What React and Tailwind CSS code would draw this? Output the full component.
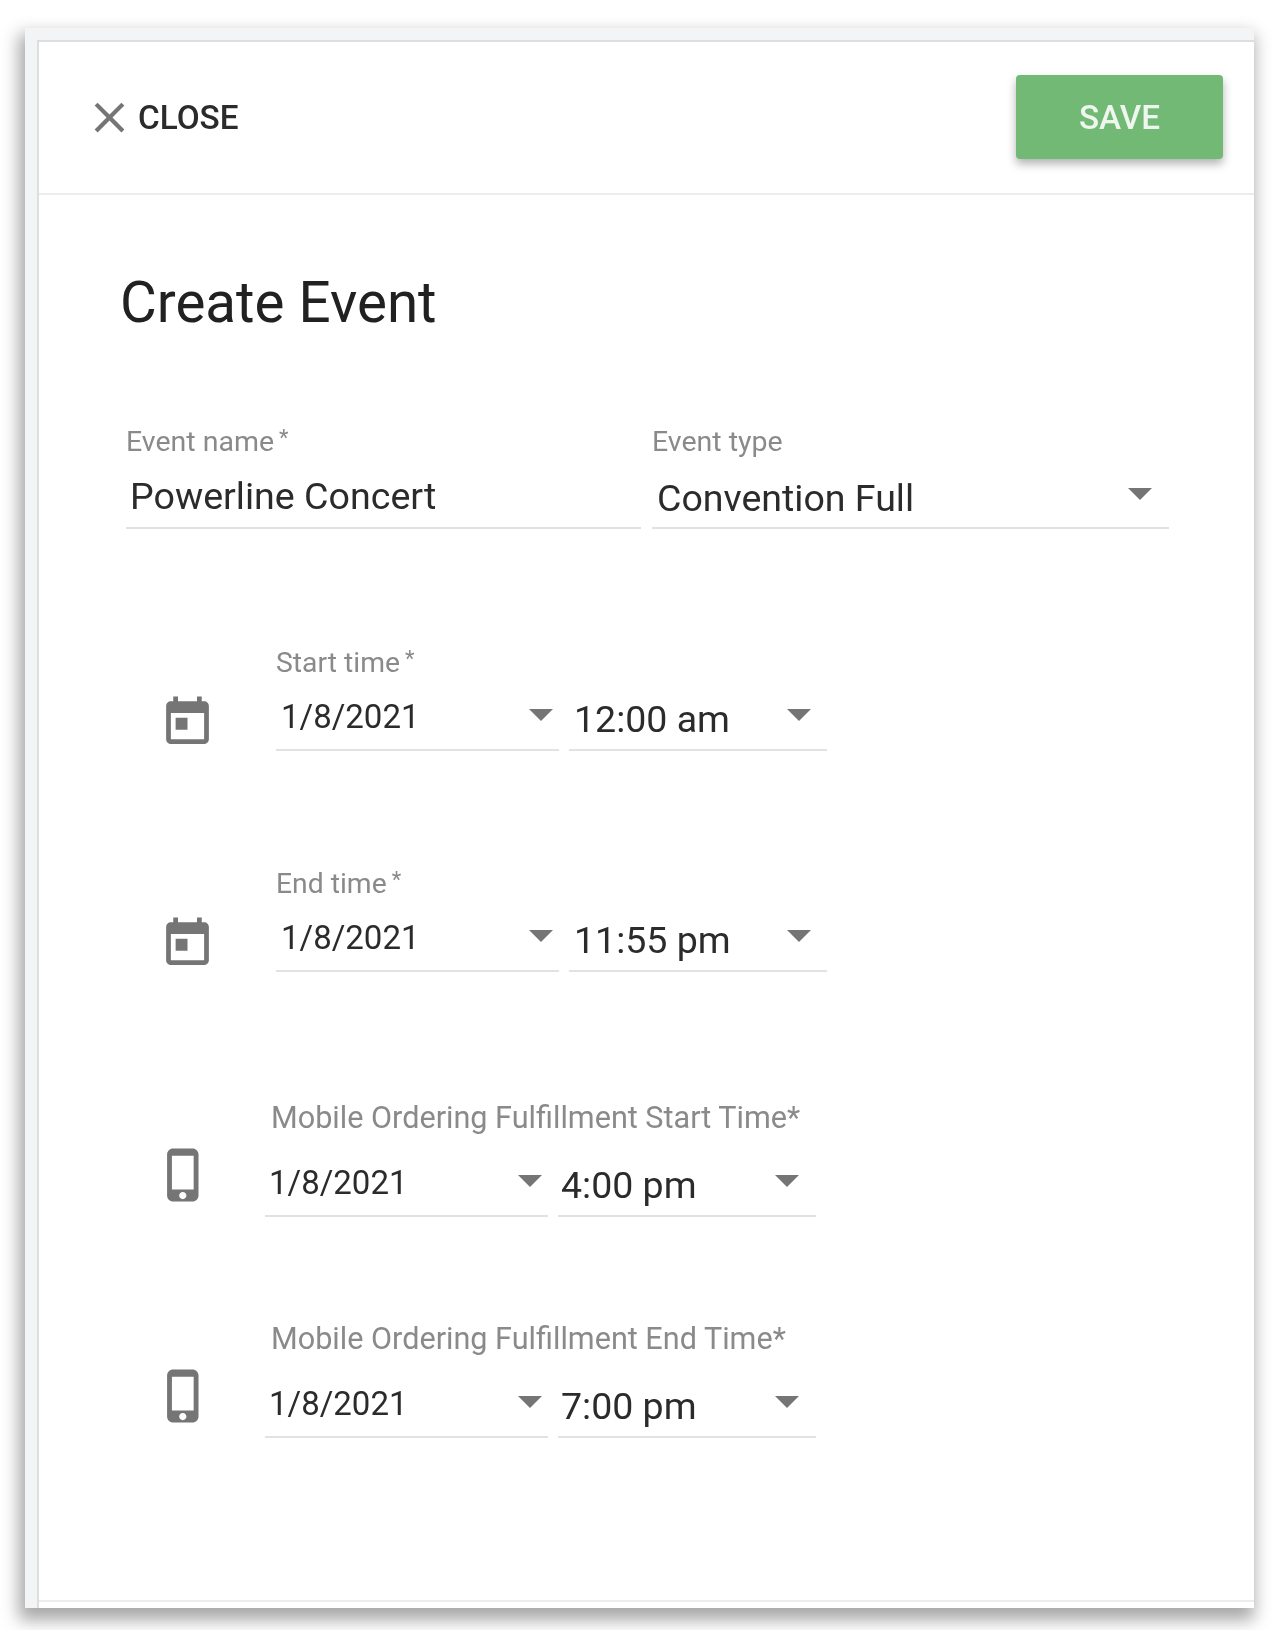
import React from 'react';

const Arrow = () => (
  <svg viewBox="0 0 24 12" className="w-6 h-3 shrink-0 fill-[#757575]">
    <polygon points="0,0 24,0 12,12" />
  </svg>
);

const CalendarIcon = () => (
  <svg viewBox="0 0 24 24" className="w-[57px] h-[57px] fill-[#757575]">
    <path d="M19 3h-1V1h-2v2H8V1H6v2H5c-1.11 0-1.99.9-1.99 2L3 19c0 1.1.89 2 2 2h14c1.1 0 2-.9 2-2V5c0-1.1-.9-2-2-2zm0 16H5V8h14v11zM7 10h5v5H7z" />
  </svg>
);

const PhoneIcon = () => (
  <svg viewBox="0 0 24 24" className="w-[58px] h-[58px] fill-[#757575]">
    <path d="M15.5 1h-8C6.12 1 5 2.12 5 3.5v17C5 21.88 6.12 23 7.5 23h8c1.38 0 2.5-1.12 2.5-2.5v-17C18 2.12 16.88 1 15.5 1zm-4 21c-.83 0-1.5-.67-1.5-1.5s.67-1.5 1.5-1.5 1.5.67 1.5 1.5-.67 1.5-1.5 1.5zm4.5-4H7V4h9v14z" />
  </svg>
);

const CalendarRow = ({ label, date, time, className }) => (
  <div className={`flex items-start ${className}`}>
    <div className="w-[237px] pl-[120px] pt-[53px] shrink-0">
      <CalendarIcon />
    </div>
    <div>
      <div className="h-[40px] leading-[44px] text-[28.3px] text-[#8a8a8a] whitespace-nowrap">
        {label}
        <span className="text-[22px] leading-[36px] align-top ml-[5px]">*</span>
      </div>
      <div className="flex gap-[10px]">
        <div className="w-[283px] h-[70px] border-b-2 border-[#e2e2e2] flex items-start justify-between pl-[5px] pr-[6px]">
          <span className="text-[33px] leading-[68px] text-[#2b2b2b] mt-[2px]">{date}</span>
          <div className="pt-[28px]"><Arrow /></div>
        </div>
        <div className="w-[258px] h-[70px] border-b-2 border-[#e2e2e2] flex items-start justify-between pl-[5px] pr-[16px]">
          <span className="text-[37.5px] leading-[68px] text-[#2b2b2b] mt-[4px]">{time}</span>
          <div className="pt-[28px]"><Arrow /></div>
        </div>
      </div>
    </div>
  </div>
);

const MobileRow = ({ label, date, time, className }) => (
  <div className={`flex items-start ${className}`}>
    <div className="w-[226px] pl-[116px] pt-[49px] shrink-0">
      <PhoneIcon />
    </div>
    <div>
      <div className="h-[40px] leading-[42px] text-[30.6px] text-[#8a8a8a] whitespace-nowrap pl-[6px]">{label}</div>
      <div className="flex gap-[10px]">
        <div className="w-[283px] h-[80px] border-b-2 border-[#e2e2e2] flex items-start justify-between pl-[4px] pr-[6px]">
          <span className="text-[33px] leading-[68px] text-[#2b2b2b] mt-[12px]">{date}</span>
          <div className="pt-[38px]"><Arrow /></div>
        </div>
        <div className="w-[258px] h-[80px] border-b-2 border-[#e2e2e2] flex items-start justify-between pl-[3px] pr-[17px]">
          <span className="text-[37.5px] leading-[68px] text-[#2b2b2b] mt-[14px]">{time}</span>
          <div className="pt-[38px]"><Arrow /></div>
        </div>
      </div>
    </div>
  </div>
);

export default function App() {
  return (
    <div className="w-[1282px] h-[1630px] bg-white pt-[28px] pl-[25px] font-['Roboto',sans-serif] overflow-hidden">
      <div className="w-[1229px] h-[1580px] bg-[#f3f4f6] pt-[12px] pl-[12px] shadow-[-3px_9px_16px_3px_rgba(0,0,0,0.35)] blur-[0.4px]">
        <div className="h-full bg-white border-t-2 border-l-2 border-[#dedede] flex flex-col">
          {/* header */}
          <div className="h-[153px] shrink-0 border-b-2 border-[#ececec] flex items-center justify-between pl-[45px] pr-[31px]">
            <div className="flex items-center gap-[3px]">
              <svg viewBox="0 0 24 24" className="w-[51px] h-[51px] fill-[#757575]">
                <path d="M19 6.41L17.59 5 12 10.59 6.41 5 5 6.41 10.59 12 5 17.59 6.41 19 12 13.41 17.59 19 19 17.59 13.41 12z" />
              </svg>
              <span className="text-[33.3px] font-medium text-[#2b2b2b]">CLOSE</span>
            </div>
            <button className="w-[207px] h-[84px] mb-[2px] pt-[2px] rounded-[4px] bg-[#72b975] text-[#eef6ee] text-[33.3px] font-medium shadow-[0_5px_10px_rgba(0,0,0,0.3)]">
              SAVE
            </button>
          </div>

          <div className="flex-1 flex flex-col">
            <h1 className="ml-[81px] mt-[68px] h-[80px] leading-[80px] text-[56.5px] text-[#212121] font-normal">Create Event</h1>

            {/* name + type */}
            <div className="flex ml-[87px] mt-[77px] gap-[11px]">
              <div className="w-[515px]">
                <div className="h-[40px] leading-[43px] text-[28.5px] text-[#8a8a8a]">
                  Event name<span className="text-[22px] leading-[36px] align-top ml-[5px]">*</span>
                </div>
                <div className="h-[69px] border-b-2 border-[#e2e2e2] pl-[4px]">
                  <span className="block text-[37.6px] leading-[72px] text-[#2b2b2b]">Powerline Concert</span>
                </div>
              </div>
              <div className="w-[517px]">
                <div className="h-[40px] leading-[43px] text-[28.5px] text-[#8a8a8a]">Event type</div>
                <div className="h-[69px] border-b-2 border-[#e2e2e2] pl-[5px] pr-[17px] flex items-start justify-between">
                  <span className="text-[37.5px] leading-[68px] text-[#2b2b2b] mt-[4px]">Convention Full</span>
                  <div className="pt-[28px]"><Arrow /></div>
                </div>
              </div>
            </div>

            <CalendarRow label="Start time" date="1/8/2021" time="12:00 am" className="mt-[112px]" />
            <CalendarRow label="End time" date="1/8/2021" time="11:55 pm" className="mt-[111px]" />
            <MobileRow label="Mobile Ordering Fulfillment Start Time*" date="1/8/2021" time="4:00 pm" className="mt-[125px]" />
            <MobileRow label="Mobile Ordering Fulfillment End Time*" date="1/8/2021" time="7:00 pm" className="mt-[101px]" />
          </div>

          {/* footer line */}
          <div className="h-[8px] shrink-0 border-t-2 border-[#ececec]" />
        </div>
      </div>
    </div>
  );
}
